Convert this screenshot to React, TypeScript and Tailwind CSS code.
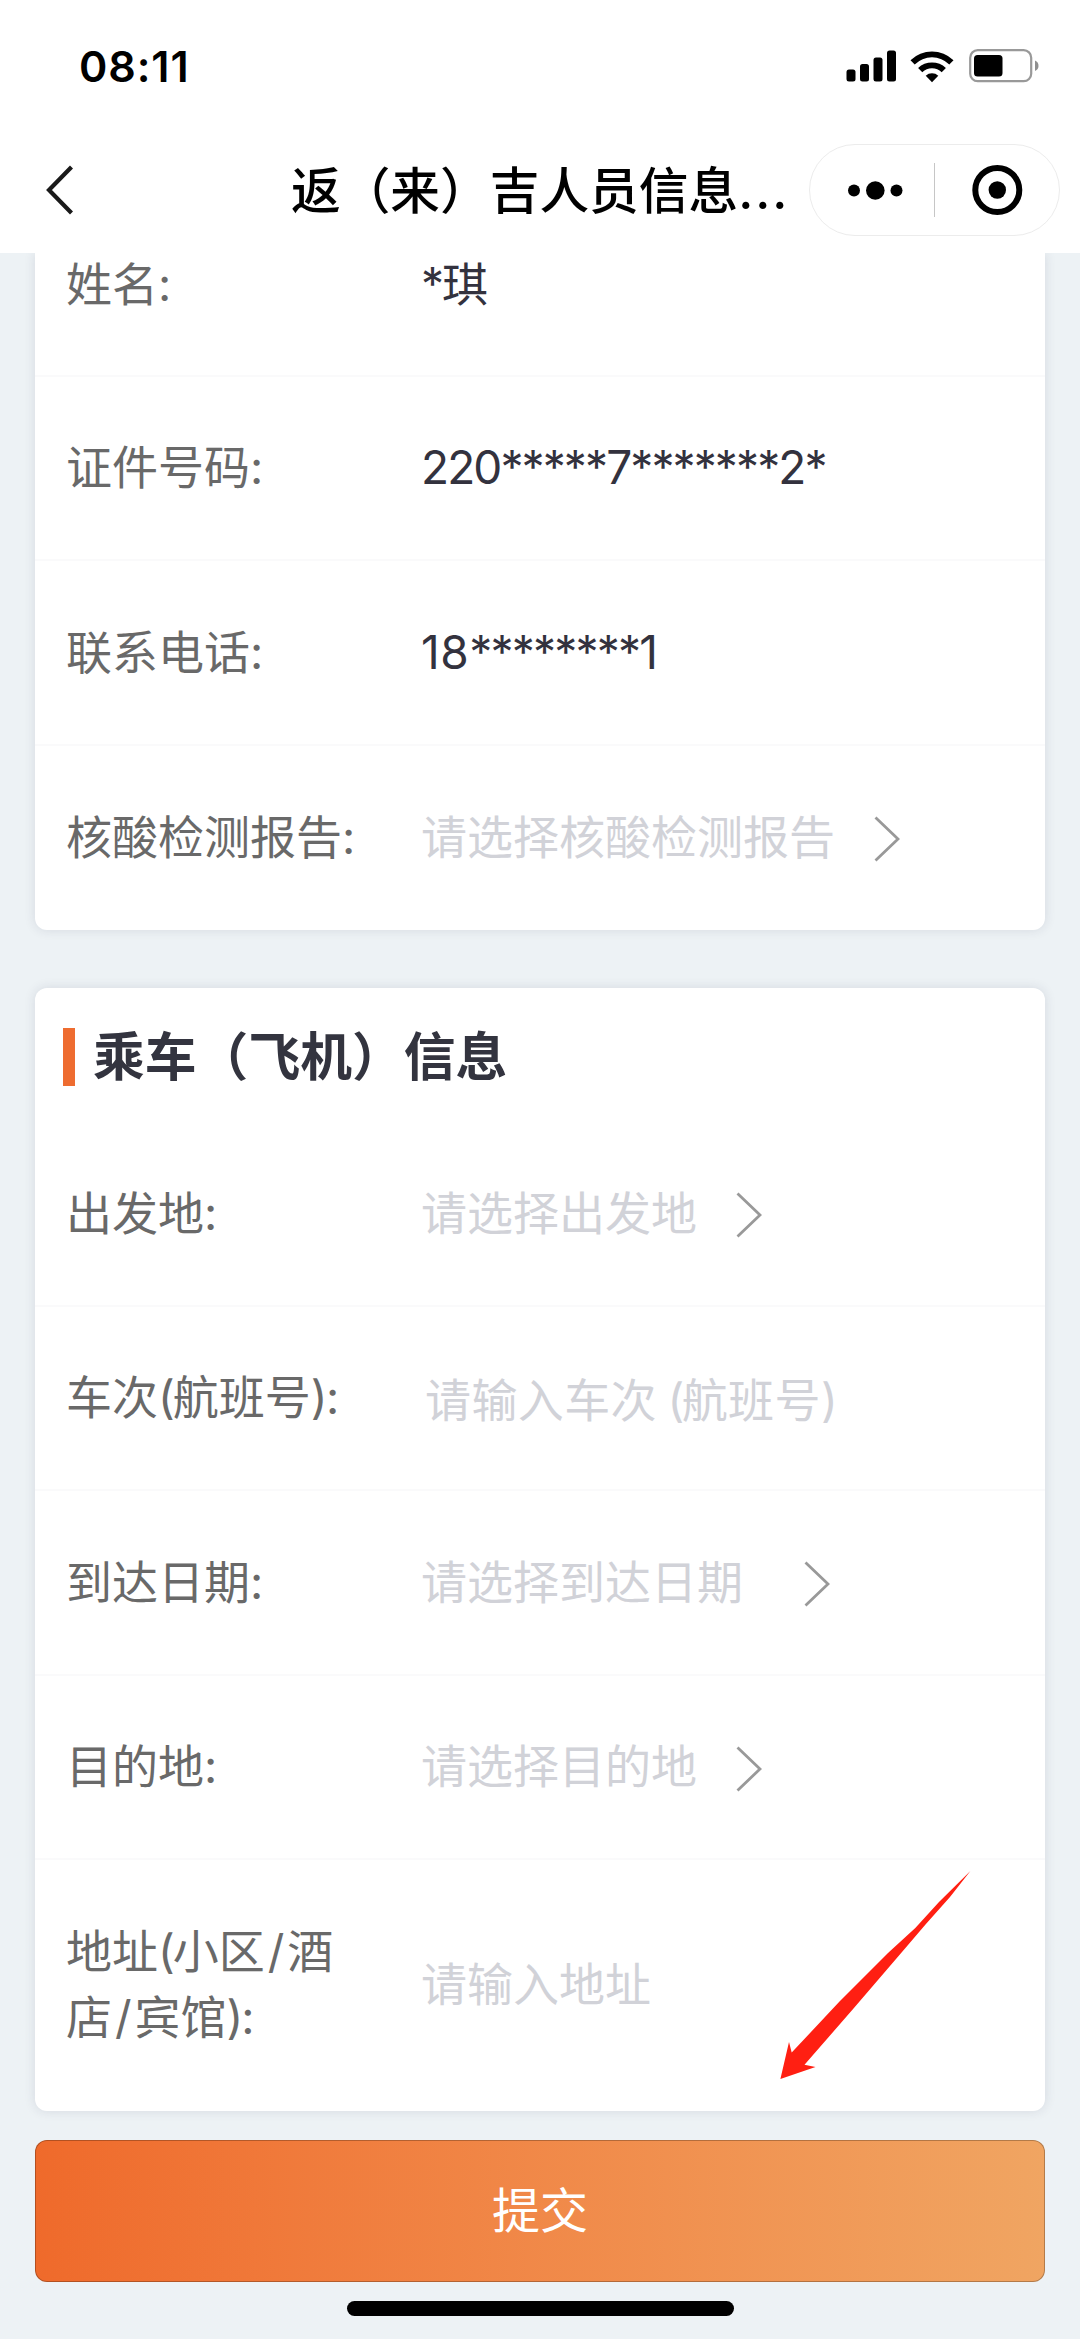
import React from "react";

type RowProps = {
  label: React.ReactNode;
  value?: React.ReactNode;
  placeholder?: React.ReactNode;
  arrow?: boolean;
  arrowClass?: string;
  className?: string;
};

const Chevron = ({ className = "ml-[38.5px]" }: { className?: string }) => (
  <svg width="26" height="46" viewBox="0 0 26 46" fill="none" className={`${className} mt-[5px] shrink-0`}>
    <path d="M1.5 1.5 L24 23 L1.5 44.5" stroke="#999999" strokeWidth="2.8" />
  </svg>
);

const Row = ({ label, value, placeholder, arrow, arrowClass, className = "h-[184.4px] pb-[2px]" }: RowProps) => (
  <div className={`flex items-center border-b-2 border-[#fafafb] pl-[31px] last:border-b-0 ${className}`}>
    <div className="w-[355px] shrink-0 whitespace-nowrap text-[#696969]">{label}</div>
    {value && <div className="whitespace-nowrap text-[#33323e]">{value}</div>}
    {placeholder && <div className="whitespace-nowrap text-[#d1d2d8]">{placeholder}</div>}
    {arrow && <Chevron className={arrowClass} />}
  </div>
);

const StatusBar = () => (
  <div className="flex h-[132px] items-center justify-between pl-[79px] pr-[40px]">
    <span className="text-[43px] font-semibold leading-none tracking-[0.9px] text-black">08:11</span>
    <div className="flex items-center">
      <svg width="50" height="32" viewBox="0 0 50 32" className="mr-[14px]">
        <rect x="0.5" y="19.5" width="9" height="12" rx="2.5" />
        <rect x="14" y="14" width="9" height="17.5" rx="2.5" />
        <rect x="27.5" y="7.5" width="9" height="24" rx="2.5" />
        <rect x="41" y="0.5" width="9" height="31" rx="2.5" />
      </svg>
      <svg width="44" height="33" viewBox="0 0 44 33" className="mr-[15px]">
        <path d="M0.5 10.2 A31 31 0 0 1 43.5 10.2 L39.3 14.4 A24.8 24.8 0 0 0 4.7 14.4 Z" />
        <path d="M8.1 18 A20 20 0 0 1 35.9 18 L31.7 22.2 A14 14 0 0 0 12.3 22.2 Z" />
        <path d="M15.7 25.8 A9.3 9.3 0 0 1 28.3 25.8 L22 32.2 Z" />
      </svg>
      <svg width="71" height="34" viewBox="0 0 71 34">
        <rect x="1.2" y="1.2" width="61" height="31" rx="7.5" fill="none" stroke="#999999" strokeWidth="2.2" />
        <rect x="5" y="6" width="28.5" height="21.5" rx="3.5" />
        <path d="M66 11.5 Q69.5 13 69.5 16.8 Q69.5 20.5 66 22 Z" fill="#8f8f8f" />
      </svg>
    </div>
  </div>
);

const NavBar = () => (
  <div className="flex h-[121px] items-start">
    <svg width="30" height="52" viewBox="0 0 30 52" fill="none" className="ml-[45px] mt-[32px]">
      <path d="M26.5 3 L4 26 L26.5 49" stroke="#1a1a1a" strokeWidth="4.2" />
    </svg>
    <h1 className="ml-[216px] mt-[23px] w-[518px] whitespace-nowrap text-[49.7px] font-medium leading-[72px] text-black">
      返（来）吉人员信息<span className="tracking-[2px]">...</span>
    </h1>
    <div className="mt-[12px] flex h-[92px] w-[251px] items-center rounded-full border-[1.5px] border-[#ececec]">
      <svg width="124" height="60" viewBox="0 0 124 60">
        <circle cx="44" cy="30.5" r="6" />
        <circle cx="65.3" cy="30.5" r="9.3" />
        <circle cx="86.5" cy="30.5" r="6" />
      </svg>
      <div className="h-[54px] w-px bg-[#c6c6c6]" />
      <svg width="124" height="60" viewBox="0 0 124 60">
        <circle cx="62.3" cy="30" r="22" fill="none" stroke="black" strokeWidth="6" />
        <circle cx="62.3" cy="30" r="8.7" />
      </svg>
    </div>
  </div>
);

// 手绘风格的红色提示箭头
const RedArrow = () => (
  <svg width="192" height="210" viewBox="0 0 192 210" className="absolute left-[779px] top-[1870px]">
    <path
      d="M191.4 1 L160 32 L136.3 58 L109 83 L60.5 131.5 L12.7 182.6 L10 172 L1.4 209 L36.5 197 L25.5 194.8 L74.5 138.5 L126 78.5 L146.5 54.5 L171 27 Z"
      fill="#ff1f12"
    />
  </svg>
);

export default function App() {
  return (
    <div className="relative flex h-[2339px] w-[1080px] flex-col overflow-hidden bg-[#edf2f5] font-['Inter','Noto_Sans_CJK_SC',sans-serif] text-[46px] leading-[66px]">
      <header className="h-[253px] shrink-0 bg-white">
        <StatusBar />
        <NavBar />
      </header>

      <main className="flex flex-col px-[35px]">
        <section className="rounded-b-xl bg-white shadow-[0_0_12px_rgba(40,40,70,0.12)] [clip-path:inset(0_-20px_-20px_-20px)]">
          <Row label="姓名:" value={<span className="tracking-[-2px]">*琪</span>} className="h-[124px] pb-[61px]" />
          <Row label="证件号码:" value={<span className="tracking-[-1.9px]">220*****7*******2*</span>} />
          <Row
            label="联系电话:"
            value={
              <>
                <span className="tracking-[0.5px]">18</span>
                <span className="tracking-[-1.8px]">********1</span>
              </>
            }
          />
          <Row label="核酸检测报告:" placeholder="请选择核酸检测报告" arrow />
        </section>

        <section className="mt-[57.5px] rounded-xl bg-white shadow-[0_0_12px_rgba(40,40,70,0.12)]">
          <div className="flex h-[135px] items-center pl-[28px]">
            <div className="mt-[3px] h-[58px] w-[12px] bg-[#ee6c30]" />
            <h2 className="ml-[18px] mt-[3px] whitespace-nowrap text-[51.8px] font-bold text-[#33343f]">乘车（飞机）信息</h2>
          </div>
          <Row label="出发地:" placeholder="请选择出发地" arrow />
          <Row
            label={
              <>
                车次<span className="tracking-[-2px]">(</span>航班号<span className="tracking-[-1.5px]">):</span>
              </>
            }
            placeholder={
              <span className="relative left-[4px] top-[3px]">
                <span className="tracking-[0.4px]">请输入车次</span>
                <span className="tracking-[-2.5px]"> (</span>
                <span className="tracking-[0.4px]">航班号)</span>
              </span>
            }
          />
          <Row label="到达日期:" placeholder="请选择到达日期" arrow arrowClass="ml-[61px]" />
          <Row label="目的地:" placeholder="请选择目的地" arrow />
          <Row
            label={
              <>
                地址<span className="tracking-[-2px]">(</span>小区<span className="px-[3px]">/</span>酒
                <br />
                店<span className="px-[3px]">/</span>宾馆<span className="tracking-[-2px]">):</span>
              </>
            }
            placeholder="请输入地址"
            className="h-[251px] pb-[3px]"
          />
        </section>

        <button className="mt-[29px] h-[142px] rounded-xl border-[1.5px] border-black/25 bg-linear-to-r from-[#ef6a2b] to-[#f0a562] bg-origin-border text-[48px] text-white">
          提交
        </button>
      </main>

      <div className="mx-auto mt-[19px] h-[15px] w-[387px] shrink-0 rounded-full bg-black" />
      <RedArrow />
    </div>
  );
}
